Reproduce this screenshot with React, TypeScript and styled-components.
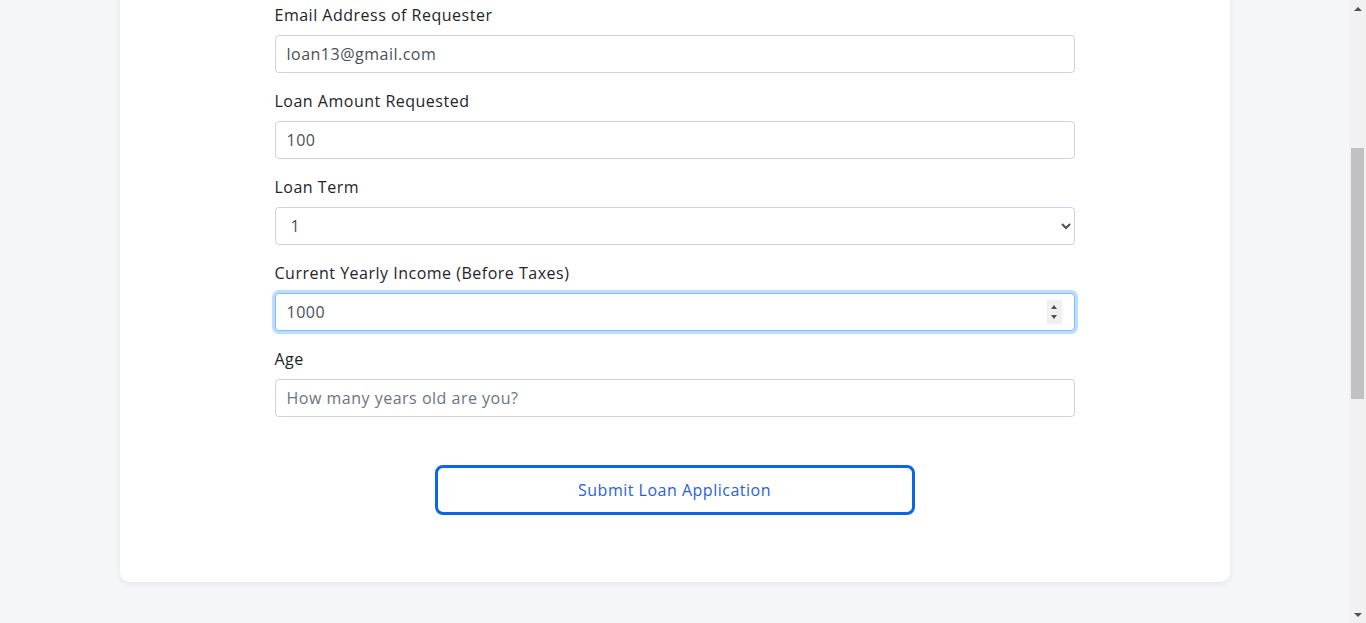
import React, { useEffect, useRef, useState } from 'react';
import styled, { createGlobalStyle } from 'styled-components';

const GlobalStyle = createGlobalStyle`
  html, body {
    margin: 0;
    padding: 0;
    height: 100%;
    overflow: hidden;
    background: #f5f6fa;
    font-family: "Open Sans", "Liberation Sans", sans-serif;
    color: #212529;
  }
  * {
    box-sizing: border-box;
  }
`;

const Shell = styled.div`
  display: flex;
  height: 100vh;
`;

const ScrollArea = styled.div`
  flex: 1;
  height: 100%;
  overflow-y: scroll;
  background: #f5f6fa;
  scrollbar-width: none;

  &::-webkit-scrollbar {
    display: none;
  }
`;

// drawn scrollbar, since the browser hides its own
const Scrollbar = styled.div`
  width: 17px;
  height: 100%;
  background: #f1f1f1;
  display: flex;
  flex-direction: column;
`;

const ArrowButton = styled.div<{ $dir: 'up' | 'down' }>`
  height: 17px;
  display: flex;
  align-items: center;
  justify-content: center;

  &::before {
    content: '';
    border-left: 4px solid transparent;
    border-right: 4px solid transparent;
    ${({ $dir }) =>
      $dir === 'up' ? 'border-bottom: 4px solid #505050;' : 'border-top: 4px solid #505050;'}
  }
`;

const Track = styled.div`
  flex: 1;
  padding: 0 2px;
`;

const Thumb = styled.div`
  background: #c1c1c1;
`;

const Page = styled.div`
  min-height: 1462px;
  padding: 27px 0 48px;
`;

const Card = styled.div`
  max-width: 1110px;
  margin: 0 auto;
  background: #ffffff;
  border-radius: 10px;
  box-shadow: 0 2px 6px rgba(30, 40, 80, 0.07);
  padding: 300px 0 67px;
`;

const Form = styled.form`
  width: 800px;
  margin: 0 auto;
  display: flex;
  flex-direction: column;
  letter-spacing: 0.5px;
`;

const Field = styled.div`
  display: flex;
  flex-direction: column;
  margin-bottom: 16px;
`;

const Label = styled.label`
  font-size: 16px;
  line-height: 24px;
  margin-bottom: 8px;
  color: #212529;
`;

const Control = styled.div`
  position: relative;
`;

const controlStyles = `
  width: 100%;
  height: 38px;
  padding: 6px 11px;
  font-family: "Open Sans", "Liberation Sans", sans-serif;
  font-size: 16px;
  line-height: 24px;
  letter-spacing: 0.5px;
  color: #495057;
  background: #ffffff;
  border: 1px solid #ced4da;
  border-radius: 4px;
  outline: none;

  &::placeholder {
    color: #6c757d;
  }

  &:focus {
    border-color: #80bdff;
    box-shadow: 0 0 0 3px rgba(0, 123, 255, 0.25);
  }

  &::-webkit-inner-spin-button,
  &::-webkit-outer-spin-button {
    -webkit-appearance: none;
    margin: 0;
  }
`;

const Input = styled.input`
  ${controlStyles}
`;

const Select = styled.select`
  ${controlStyles}
`;

// spin box shown on the focused number field
const SpinBox = styled.div`
  position: absolute;
  top: 7px;
  right: 13px;
  width: 15px;
  height: 24px;
  background: #efefef;
  display: flex;
  flex-direction: column;
  align-items: center;
  justify-content: center;
  gap: 6px;

  &::before,
  &::after {
    content: '';
    border-left: 3.5px solid transparent;
    border-right: 3.5px solid transparent;
  }
  &::before {
    border-bottom: 4px solid #505050;
  }
  &::after {
    border-top: 4px solid #505050;
  }
`;

const SubmitButton = styled.button`
  align-self: center;
  width: 480px;
  height: 50px;
  margin-top: 32px;
  background: #ffffff;
  border: 3px solid #0a66e4;
  border-radius: 8px;
  color: #2b5fd9;
  font-family: "Open Sans", "Liberation Sans", sans-serif;
  font-size: 16px;
  letter-spacing: 0.5px;
  cursor: pointer;
`;

export default function App() {
  const scrollRef = useRef<HTMLDivElement>(null);
  const anchorRef = useRef<HTMLDivElement>(null);
  const incomeRef = useRef<HTMLInputElement>(null);
  const [thumb, setThumb] = useState({ top: 132, height: 251 });

  const updateThumb = () => {
    const box = scrollRef.current;
    if (!box) return;
    const trackLen = box.clientHeight - 34;
    setThumb({
      top: (box.scrollTop / box.scrollHeight) * trackLen,
      height: (box.clientHeight / box.scrollHeight) * trackLen,
    });
  };

  useEffect(() => {
    incomeRef.current?.focus({ preventScroll: true });
    const box = scrollRef.current;
    const el = anchorRef.current;
    if (box && el) {
      box.scrollTop = el.offsetTop - box.offsetTop - 3;
    }
    updateThumb();
  }, []);

  return (
    <>
      <GlobalStyle />
      <Shell>
        <ScrollArea ref={scrollRef} onScroll={updateThumb}>
          <Page>
            <Card>
              <Form onSubmit={(e) => e.preventDefault()}>
                <Field ref={anchorRef}>
                  <Label>Email Address of Requester</Label>
                  <Input type="email" defaultValue="loan13@gmail.com" />
                </Field>
                <Field>
                  <Label>Loan Amount Requested</Label>
                  <Input type="number" defaultValue="100" />
                </Field>
                <Field>
                  <Label>Loan Term</Label>
                  <Select defaultValue="1">
                    <option value="1">1</option>
                    <option value="2">2</option>
                    <option value="3">3</option>
                    <option value="5">5</option>
                  </Select>
                </Field>
                <Field>
                  <Label>Current Yearly Income (Before Taxes)</Label>
                  <Control>
                    <Input ref={incomeRef} type="number" defaultValue="1000" />
                    <SpinBox />
                  </Control>
                </Field>
                <Field>
                  <Label>Age</Label>
                  <Input type="number" placeholder="How many years old are you?" />
                </Field>

                <SubmitButton type="submit">Submit Loan Application</SubmitButton>
              </Form>
            </Card>
          </Page>
        </ScrollArea>
        <Scrollbar>
          <ArrowButton $dir="up" />
          <Track>
            <Thumb style={{ marginTop: thumb.top, height: thumb.height }} />
          </Track>
          <ArrowButton $dir="down" />
        </Scrollbar>
      </Shell>
    </>
  );
}
